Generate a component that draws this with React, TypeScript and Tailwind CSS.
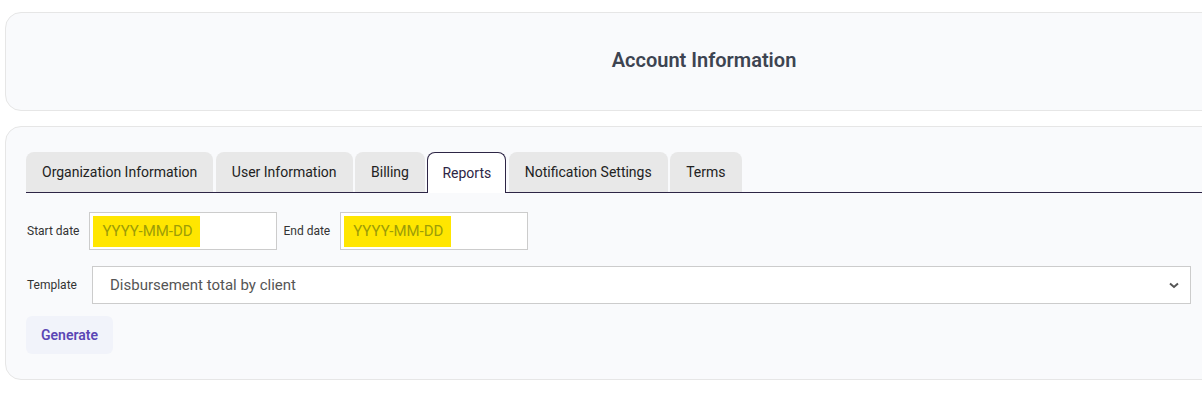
import React from 'react'

const tabs = ['Organization Information', 'User Information', 'Billing', 'Reports', 'Notification Settings', 'Terms']

function DateField({ label }: { label: string }) {
  return (
    <>
      <span className="text-[12px] text-[#333] mr-[10px]">{label}</span>
      <div className="w-[188px] h-[38px] border border-[#cccccc] bg-white flex items-center pl-[3px]">
        <span className="bg-[#ffe600] h-[31px] w-[107px] flex items-center pl-[9px] text-[15px] text-[#9c9c08]">
          YYYY-MM-DD
        </span>
      </div>
    </>
  )
}

function App() {
  return (
    <div className="w-full overflow-hidden bg-white min-h-[397px]" style={{ fontFamily: 'Roboto, "Liberation Sans", sans-serif' }}>
      <div className="w-[1408px] px-[5px] pt-[12px] flex flex-col gap-[15px]">
        <div className="h-[99px] rounded-2xl border border-[#e6e6e6] bg-[#f9fafc] flex items-center justify-center pb-[4px]">
          <h1 className="text-[20px] font-semibold text-[#3d4451]">Account Information</h1>
        </div>

        <div className="rounded-2xl border border-[#e6e6e6] bg-[#f9fafc] px-[20px] pt-[25px] pb-[25px]">
          <div className="flex gap-[2.5px] border-b border-[#2d2545]">
            {tabs.map((t) =>
              t === 'Reports' ? (
                <div key={t} className="h-[41px] -mb-px px-[14px] flex items-center text-[14px] text-[#2d2545] bg-white border border-b-0 border-[#2d2545] rounded-t-lg">
                  {t}
                </div>
              ) : (
                <div key={t} className="h-[40px] px-[16px] flex items-center text-[14px] text-[#222] bg-[#e8e8e8] rounded-t-lg">
                  {t}
                </div>
              )
            )}
          </div>

          <div className="mt-[19px] flex items-center pl-[1px]">
            <DateField label="Start date" />
            <span className="ml-[6px]"></span>
            <DateField label="End date" />
          </div>

          <div className="mt-[16px] flex items-center pl-[1px]">
            <span className="text-[12px] text-[#333] w-[65px]">Template</span>
            <div className="w-[1099px] h-[38px] border border-[#cccccc] bg-white flex items-center justify-between pl-[17px] pr-[10px]">
              <span className="text-[15px] text-[#555]">Disbursement total by client</span>
              <svg width="12" height="12" viewBox="0 0 12 12" fill="none" stroke="#555" strokeWidth="2">
                <path d="M2 4.5l4 3.5 4-3.5" />
              </svg>
            </div>
          </div>

          <button className="mt-[12px] h-[38px] w-[87px] rounded-md bg-[#f1f3fa] text-[14px] font-semibold text-[#5b47b5]">
            Generate
          </button>
        </div>
      </div>
    </div>
  )
}

export default App
